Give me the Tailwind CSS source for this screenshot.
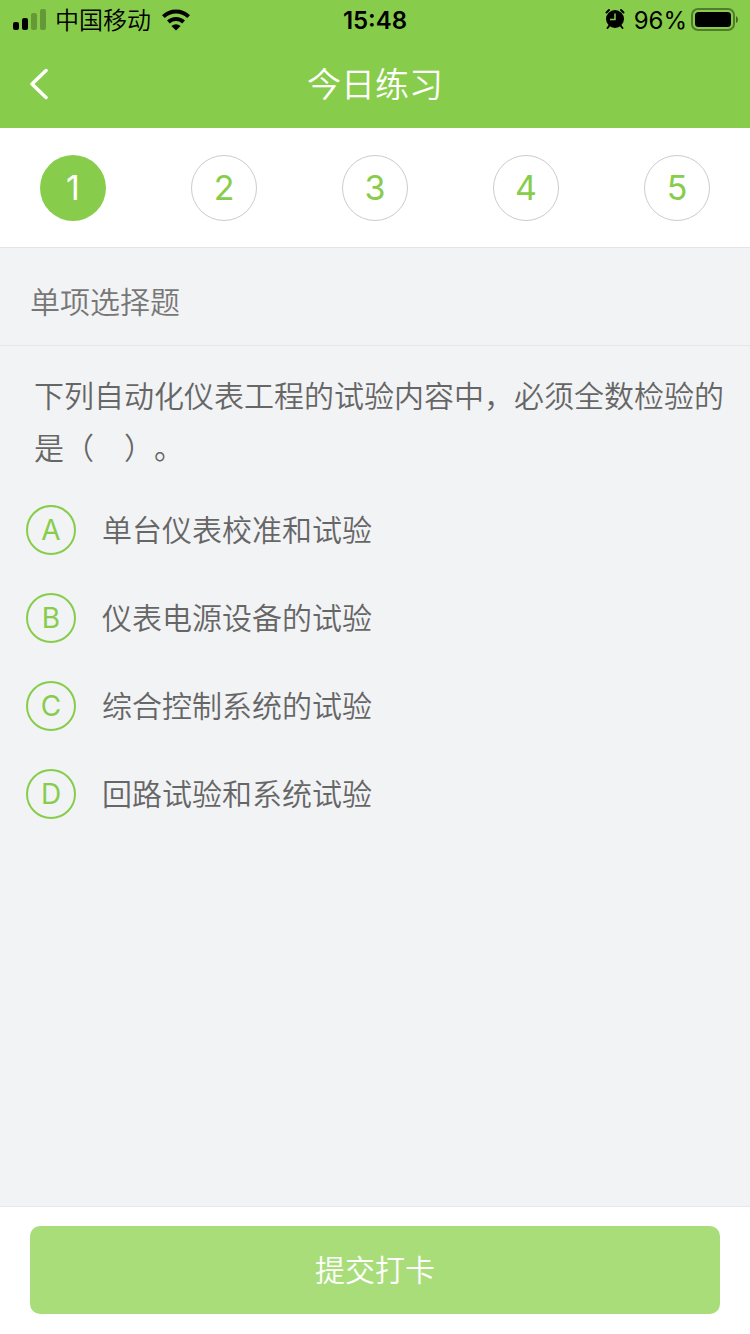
<!DOCTYPE html>
<html lang="zh-CN">
<head>
    <meta charset="UTF-8">
    <meta name="viewport" content="width=device-width, initial-scale=1.0">
    <title>今日练习</title>
    <script src="https://cdn.jsdelivr.net/npm/@tailwindcss/browser@4"></script>
</head>
<body class="flex min-h-screen flex-col bg-[#f2f3f5] font-['Inter','Noto_Sans_CJK_SC',sans-serif] font-[350] text-[#666666] [text-spacing-trim:space-all]">
    <!-- Header -->
    <header class="bg-[#87cd4b]">
        <!-- Status bar -->
        <div class="grid h-10 grid-cols-3 items-center px-3 pt-0.5 text-2xl text-black">
            <div class="flex items-center gap-2">
                <svg class="h-6 w-[35px]" viewBox="0 0 35 24" fill="currentColor">
                    <rect x="1" y="13" width="6" height="8" rx="2"/>
                    <rect x="10" y="9" width="6" height="12" rx="2"/>
                    <rect x="19" y="4" width="6" height="17" rx="2" opacity=".25"/>
                    <rect x="28" y="0" width="6" height="21" rx="2" opacity=".25"/>
                </svg>
                <span class="whitespace-nowrap">中国移动</span>
                <svg class="h-6 w-[34px] shrink-0" viewBox="0 0 32 24" fill="none" stroke="currentColor" stroke-width="4">
                    <path d="M3.400 7.600a18 18 0 0 1 25.200 0"/>
                    <path d="M8.400 13a11 11 0 0 1 15.200 0"/>
                    <path d="M16 21.500l-4.600-4.400a6.800 6.800 0 0 1 9.200 0z" fill="currentColor" stroke="none"/>
                </svg>
            </div>
            <span class="text-center font-semibold">15:48</span>
            <div class="flex items-center justify-end">
                <svg class="mr-2 mb-1 h-[22px] w-[22px]" viewBox="1 1 22 22">
                    <circle cx="12" cy="12" r="9"/>
                    <path d="M3.500 5.500l2.500-2.500M20.500 5.500l-2.500-2.500M6.500 18.500l-2 2.500M17.500 18.500l2 2.500" stroke="#000" stroke-width="2" stroke-linecap="round"/>
                    <path d="M12 6.500v6H7" fill="none" stroke="#87cd4b" stroke-width="1.500"/>
                </svg>
                <span class="font-normal">96%</span>
                <svg class="ml-1 mb-1 h-6 w-[47px]" viewBox="0 0 47 24">
                    <rect x="1" y="2" width="42" height="21" rx="6" fill="none" stroke="#000" stroke-opacity=".4" stroke-width="2"/>
                    <rect x="4" y="5" width="36" height="15" rx="3.500"/>
                    <path d="M45 9v7q2-1 2-3.500T45 9z" opacity=".5"/>
                </svg>
            </div>
        </div>
        <!-- Title bar -->
        <div class="grid h-22 grid-cols-[80px_1fr_80px] items-center text-white">
            <button type="button" aria-label="返回" class="flex h-full items-center pl-7">
                <svg class="h-8 w-5" viewBox="0 0 20 32" fill="none" stroke="currentColor" stroke-width="3.500" stroke-linecap="round" stroke-linejoin="round">
                    <path d="M18 2.500L4 16l14 13.500"/>
                </svg>
            </button>
            <h1 class="text-center text-[34px] font-[350]">今日练习</h1>
        </div>
    </header>

    <!-- Question numbers -->
    <nav class="flex h-30 items-center justify-between border-b border-[#e5e5e5] bg-white px-10 text-[34px] font-normal text-[#87cd4b]">
        <button type="button" class="size-[66px] rounded-full bg-[#87cd4b] text-white">1</button>
        <button type="button" class="size-[66px] rounded-full border border-[#cccccc]">2</button>
        <button type="button" class="size-[66px] rounded-full border border-[#cccccc]">3</button>
        <button type="button" class="size-[66px] rounded-full border border-[#cccccc]">4</button>
        <button type="button" class="size-[66px] rounded-full border border-[#cccccc]">5</button>
    </nav>

    <main class="flex-1 text-[30px]">
        <h2 class="flex h-[98px] items-center border-b border-[#e6e7e9] px-[30px] pt-3 font-[350] text-[#777777]">单项选择题</h2>

        <fieldset>
            <legend class="pl-[34px] pr-6 pt-6 leading-[52px]">下列自动化仪表工程的试验内容中，必须全数检验的是（　）。</legend>
            <div class="flex flex-col gap-[38px] px-[26px] pt-[31px]">
                <label class="flex h-[50px] items-center gap-[26px]">
                    <input type="radio" name="answer" value="A" class="sr-only">
                    <span class="flex size-[50px] items-center justify-center rounded-full border-2 border-[#87cd4b] text-[28px] font-normal text-[#87cd4b]">A</span>
                    <span>单台仪表校准和试验</span>
                </label>
                <label class="flex h-[50px] items-center gap-[26px]">
                    <input type="radio" name="answer" value="B" class="sr-only">
                    <span class="flex size-[50px] items-center justify-center rounded-full border-2 border-[#87cd4b] text-[28px] font-normal text-[#87cd4b]">B</span>
                    <span>仪表电源设备的试验</span>
                </label>
                <label class="flex h-[50px] items-center gap-[26px]">
                    <input type="radio" name="answer" value="C" class="sr-only">
                    <span class="flex size-[50px] items-center justify-center rounded-full border-2 border-[#87cd4b] text-[28px] font-normal text-[#87cd4b]">C</span>
                    <span>综合控制系统的试验</span>
                </label>
                <label class="flex h-[50px] items-center gap-[26px]">
                    <input type="radio" name="answer" value="D" class="sr-only">
                    <span class="flex size-[50px] items-center justify-center rounded-full border-2 border-[#87cd4b] text-[28px] font-normal text-[#87cd4b]">D</span>
                    <span>回路试验和系统试验</span>
                </label>
            </div>
        </fieldset>
    </main>

    <!-- Submit -->
    <footer class="border-t border-[#e6e7e9] bg-white px-[30px] pb-5 pt-[19px]">
        <button type="submit" class="h-22 w-full rounded-[10px] bg-[#a9dd7a] text-[30px] text-white">提交打卡</button>
    </footer>
</body>
</html>
